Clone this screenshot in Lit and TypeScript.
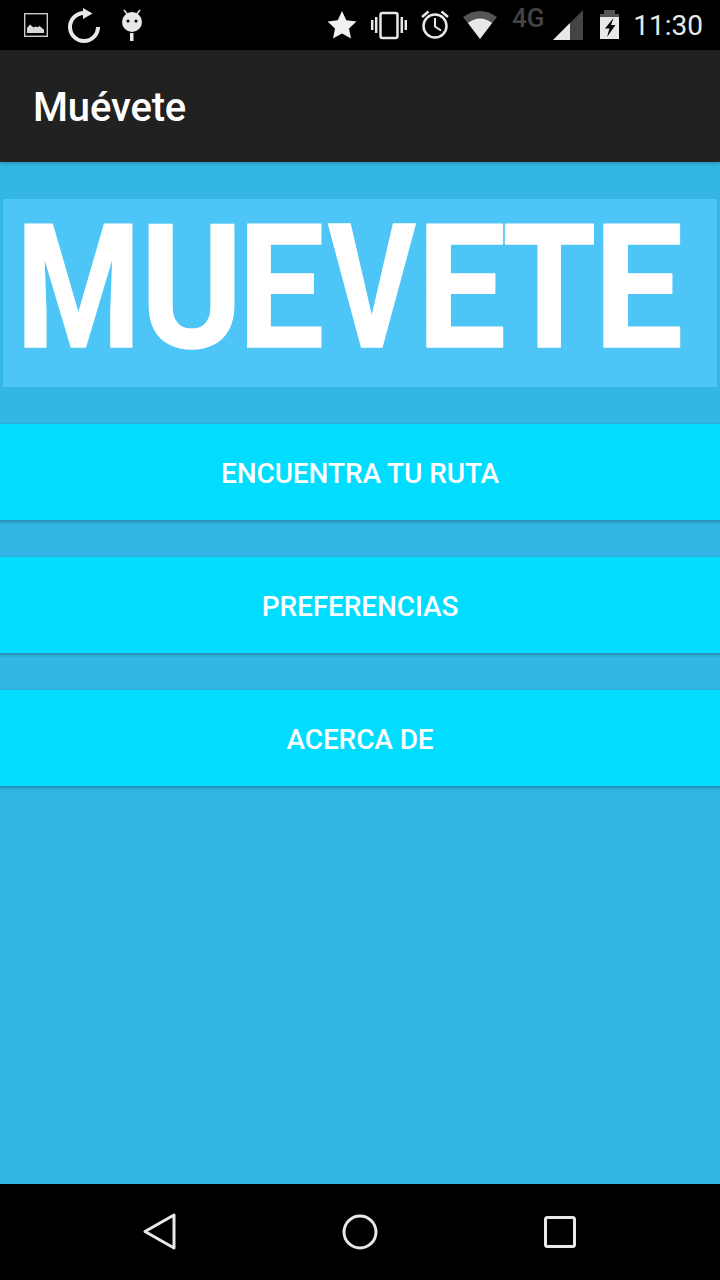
import { LitElement, css, html, svg } from "lit";
import { customElement } from "lit/decorators.js";

// banner letters: glyph, origin inside the box, horizontal squeeze
const LOGO_LETTERS: [string, number, number][] = [
  ["M", 13, 0.83],
  ["U", 137.5, 0.9],
  ["E", 235, 0.89],
  ["V", 325, 0.78],
  ["E", 414, 0.92],
  ["T", 499.5, 0.88],
  ["E", 591, 0.92],
];

const BUTTONS = ["ENCUENTRA TU RUTA", "PREFERENCIAS", "ACERCA DE"];

@customElement("app-root")
export class AppRoot extends LitElement {
  static styles = css`
    :host {
      display: flex;
      flex-direction: column;
      height: 1280px;
      width: 720px;
      background: #33b5e5;
      font-family: Roboto, "Liberation Sans", sans-serif;
    }

    .status {
      display: flex;
      align-items: center;
      height: 50px;
      padding: 0 17px 0 24px;
      background: #000;
      color: #e8e8e8;
      box-sizing: border-box;
    }

    .status svg {
      display: block;
      height: 50px;
      flex: none;
    }

    .spacer {
      flex: 1;
    }

    .time {
      font-size: 28px;
      line-height: 50px;
      margin-left: 14px;
      padding-top: 2px;
    }

    .appbar {
      position: relative;
      z-index: 1;
      display: flex;
      align-items: center;
      height: 112px;
      padding: 3px 32px 0 33px;
      background: #212121;
      color: #fff;
      font-size: 40px;
      font-weight: 500;
      letter-spacing: -0.15px;
      box-sizing: border-box;
      box-shadow: 0 1px 4px rgba(0, 0, 0, 0.25);
    }

    .content {
      flex: 1;
      display: flex;
      flex-direction: column;
      gap: 37px;
      padding-top: 37px;
    }

    .logo {
      display: block;
      height: 188px;
      margin: 0 3px;
      background: #4dc5f6;
    }

    .logo text {
      font-family: Roboto, "Liberation Sans", sans-serif;
      font-weight: 700;
      font-size: 172px;
      fill: #fff;
      stroke: #fff;
      stroke-width: 1.500px;
      stroke-linejoin: round;
    }

    .btn {
      display: flex;
      align-items: center;
      justify-content: center;
      height: 96px;
      padding-top: 2px;
      box-sizing: border-box;
      background: #00ddff;
      color: #fff;
      font-size: 28px;
      font-weight: 500;
      letter-spacing: -0.1px;
      box-shadow: 0 2px 0 rgba(0, 0, 0, 0.14), 0 4px 0 rgba(0, 0, 0, 0.06), 0 -1px 0 rgba(0, 0, 0, 0.04);
    }

    .nav {
      display: flex;
      align-items: center;
      justify-content: center;
      height: 96px;
      background: #000;
    }

    .nav svg {
      display: block;
      width: 480px;
      height: 96px;
    }
  `;

  renderLeftIcons() {
    return html`
      <svg viewBox="24 0 24 50" width="24" style="margin-right:20px">
        <rect x="24.700" y="13.700" width="22.600" height="22.600" fill="none" stroke="#c8c8c8" stroke-width="1.400" />
        <path d="M27 33v-5l3-3.500 3.500 3 2-1 2 .8 2-1.200 3 2.500 1.500 1V33z" fill="#d8d8d8" />
      </svg>
      <svg viewBox="68 0 32 50" width="32" style="margin-right:22px">
        <path d="M84 13a14 14 0 1 0 14 14" fill="none" stroke="#e8e8e8" stroke-width="4" />
        <path d="M83 8l9.500 5.500L83 19z" fill="#e8e8e8" />
      </svg>
      <svg viewBox="122 0 20 50" width="20">
        <circle cx="132" cy="22" r="10" fill="#e8e8e8" />
        <path d="M124 10l3.500 4.500M140 10l-3.500 4.500" stroke="#e8e8e8" stroke-width="1.500" />
        <circle cx="128" cy="21" r="1.500" fill="#000" />
        <circle cx="136" cy="21" r="1.500" fill="#000" />
        <rect x="130" y="33" width="3.500" height="8" fill="#e8e8e8" />
      </svg>
    `;
  }

  renderRightIcons() {
    return html`
      <svg viewBox="327 0 30 50" width="30" style="margin-right:14px">
        <path d="M342 11l4.300 9.300 10.200 1.200-7.500 6.900 2 10-9-5-9 5 2-10-7.500-6.900 10.200-1.200z" fill="#f0f0f0" />
      </svg>
      <svg viewBox="371 0 36 50" width="36" style="margin-right:14px">
        <rect x="380.500" y="13" width="17" height="25" rx="2" fill="none" stroke="#e8e8e8" stroke-width="2.500" />
        <path d="M372.200 20v10M376.200 17v16M401.800 17v16M405.800 20v10" stroke="#e8e8e8" stroke-width="2.500" />
      </svg>
      <svg viewBox="421 0 28 50" width="28" style="margin-right:14px">
        <circle cx="435" cy="26" r="11.500" fill="none" stroke="#e8e8e8" stroke-width="2.500" />
        <path d="M435 18v8.500l6 4" fill="none" stroke="#e8e8e8" stroke-width="2" />
        <path d="M422 17l6.500-5.500M448 17l-6.500-5.500" stroke="#e8e8e8" stroke-width="2.500" />
      </svg>
      <svg viewBox="463 0 34 50" width="34" style="margin-right:15px">
        <path d="M463 17Q480 5 497 17L480 39z" fill="#555" />
        <path d="M468 23Q480 14 492 23L480 39z" fill="#e8e8e8" />
      </svg>
      <svg viewBox="512 0 33 50" width="33" style="margin-right:8px">
        <text x="512" y="27" font-size="26" font-weight="500" fill="#444">4G</text>
      </svg>
      <svg viewBox="553 0 30 50" width="30" style="margin-right:17px">
        <path d="M553 40L583 10V40z" fill="#444" />
        <path d="M553 40L570 23V40z" fill="#e8e8e8" />
      </svg>
      <svg viewBox="600 0 19 50" width="19">
        <path d="M604 10h11v4h4v3H600v-3h4z" fill="#555" />
        <path d="M600 17h19v22H600z" fill="#e8e8e8" />
        <path d="M613.500 18L605 28.500h4.500L607 37l8.500-12H611z" fill="#000" />
      </svg>
    `;
  }

  renderLogo() {
    return html`
      <svg class="logo" viewBox="0 0 714 188" height="188">
        ${LOGO_LETTERS.map(
          ([ch, x, sx]) => svg`<text transform="translate(${x} 148) scale(${sx} 1)">${ch}</text>`,
        )}
      </svg>
    `;
  }

  render() {
    return html`
      <div class="status">
        ${this.renderLeftIcons()}
        <div class="spacer"></div>
        ${this.renderRightIcons()}
        <span class="time">11:30</span>
      </div>
      <div class="appbar">Muévete</div>
      <div class="content">
        ${this.renderLogo()} ${BUTTONS.map((label) => html`<div class="btn">${label}</div>`)}
      </div>
      <div class="nav">
        <svg viewBox="120 1184 480 96">
          <path d="M174 1215v33l-29-16.500z" fill="none" stroke="#e8e8e8" stroke-width="3" stroke-linejoin="round" />
          <circle cx="360" cy="1232" r="16" fill="none" stroke="#e8e8e8" stroke-width="3" />
          <rect x="545.500" y="1217.500" width="29" height="29" rx="2" fill="none" stroke="#e8e8e8" stroke-width="3" />
        </svg>
      </div>
    `;
  }
}
